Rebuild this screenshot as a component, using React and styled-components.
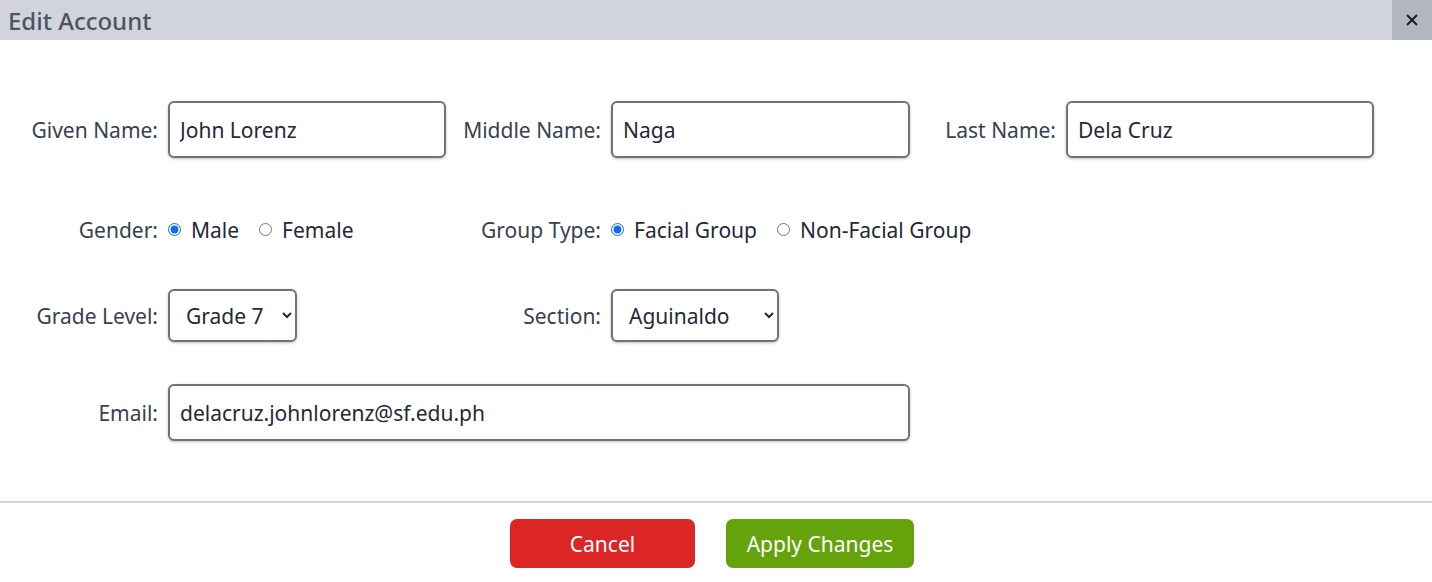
import React from "react";
import styled, { createGlobalStyle } from "styled-components";

const GlobalStyle = createGlobalStyle`
  body {
    margin: 0;
    background: #ffffff;
    font-family: "Noto Sans", "Open Sans", sans-serif;
  }
`;

const Modal = styled.div`
  width: 1432px;
  height: 582px;
  background: white;
  display: flex;
  flex-direction: column;
`;

const Header = styled.div`
  height: 40px;
  background: #d1d5db;
  display: flex;
  align-items: center;
  justify-content: space-between;
`;

const Title = styled.h2`
  margin: 0;
  padding-left: 8px;
  font-size: 24px;
  font-weight: 500;
  color: #4b5563;
`;

const CloseButton = styled.button`
  width: 40px;
  height: 40px;
  border: none;
  background: #b2b7bf;
  display: flex;
  align-items: center;
  justify-content: center;
  padding: 0;
  cursor: pointer;
`;

const Body = styled.div`
  padding: 61px 0 60px;
  border-bottom: 2px solid #d1d5db;
`;

const Row = styled.div`
  display: grid;
  grid-template-columns: 158px 278px 145px 299px 136px 308px;
  column-gap: 10px;
  align-items: center;
  height: ${(p) => p.$h}px;
  margin-top: ${(p) => p.$mt || 0}px;
`;

const Label = styled.label`
  text-align: right;
  font-size: 21px;
  color: #374151;
  white-space: nowrap;
`;

const TextInput = styled.input`
  box-sizing: border-box;
  height: 57px;
  width: 100%;
  grid-column: ${(p) => p.$span || "auto"};
  border: 2px solid #6b7280;
  border-radius: 6px;
  box-shadow: 0 1px 3px rgba(0, 0, 0, 0.25);
  padding: 0 10px;
  font-family: inherit;
  font-size: 21px;
  color: #1f2937;
  outline: none;
`;

const Select = styled.select`
  box-sizing: border-box;
  height: 53px;
  width: ${(p) => p.$w}px;
  border: 2px solid #6b7280;
  border-radius: 6px;
  box-shadow: 0 1px 3px rgba(0, 0, 0, 0.25);
  padding: 0 10px 0 12px;
  font-family: inherit;
  font-size: 21px;
  color: #1f2937;
  background: white;
  outline: none;
`;

const RadioGroup = styled.div`
  display: flex;
  align-items: center;
  gap: 20px;
  grid-column: ${(p) => p.$span || "auto"};
  white-space: nowrap;
`;

const RadioOption = styled.label`
  display: flex;
  align-items: center;
  gap: 10px;
  font-size: 21px;
  color: #1f2937;
`;

const Radio = styled.input`
  margin: 0;
  width: 13px;
  height: 13px;
  accent-color: #0b6cf0;
`;

const Footer = styled.div`
  display: flex;
  justify-content: center;
  gap: 31px;
  padding: 16px 8px 0 0;
`;

const ActionButton = styled.button`
  height: 49px;
  width: ${(p) => p.$w}px;
  border: none;
  border-radius: 7px;
  background: ${(p) => p.$bg};
  color: white;
  font-family: inherit;
  font-size: 21px;
  cursor: pointer;
`;

export default function App() {
  return (
    <>
      <GlobalStyle />
      <Modal>
        <Header>
          <Title>Edit Account</Title>
          <CloseButton aria-label="Close">
            <svg width="14" height="14" viewBox="0 0 14 14">
              <path d="M2 2 L12 12 M12 2 L2 12" stroke="#111827" strokeWidth="1.8" />
            </svg>
          </CloseButton>
        </Header>
        <Body>
          <Row $h={57}>
            <Label>Given Name:</Label>
            <TextInput defaultValue="John Lorenz" />
            <Label>Middle Name:</Label>
            <TextInput defaultValue="Naga" />
            <Label>Last Name:</Label>
            <TextInput defaultValue="Dela Cruz" />
          </Row>
          <Row $h={57} $mt={43}>
            <Label>Gender:</Label>
            <RadioGroup>
              <RadioOption>
                <Radio type="radio" name="gender" defaultChecked />
                Male
              </RadioOption>
              <RadioOption>
                <Radio type="radio" name="gender" />
                Female
              </RadioOption>
            </RadioGroup>
            <Label>Group Type:</Label>
            <RadioGroup $span="span 3">
              <RadioOption>
                <Radio type="radio" name="group" defaultChecked />
                Facial Group
              </RadioOption>
              <RadioOption>
                <Radio type="radio" name="group" />
                Non-Facial Group
              </RadioOption>
            </RadioGroup>
          </Row>
          <Row $h={53} $mt={31}>
            <Label>Grade Level:</Label>
            <div>
              <Select $w={129} defaultValue="7">
                <option value="7">Grade 7</option>
                <option value="8">Grade 8</option>
              </Select>
            </div>
            <Label>Section:</Label>
            <div>
              <Select $w={168} defaultValue="aguinaldo">
                <option value="aguinaldo">Aguinaldo</option>
              </Select>
            </div>
          </Row>
          <Row $h={57} $mt={42}>
            <Label>Email:</Label>
            <TextInput $span="span 3" defaultValue="delacruz.johnlorenz@sf.edu.ph" />
          </Row>
        </Body>
        <Footer>
          <ActionButton $w={185} $bg="#dc2626">Cancel</ActionButton>
          <ActionButton $w={188} $bg="#65a30d">Apply Changes</ActionButton>
        </Footer>
      </Modal>
    </>
  );
}
